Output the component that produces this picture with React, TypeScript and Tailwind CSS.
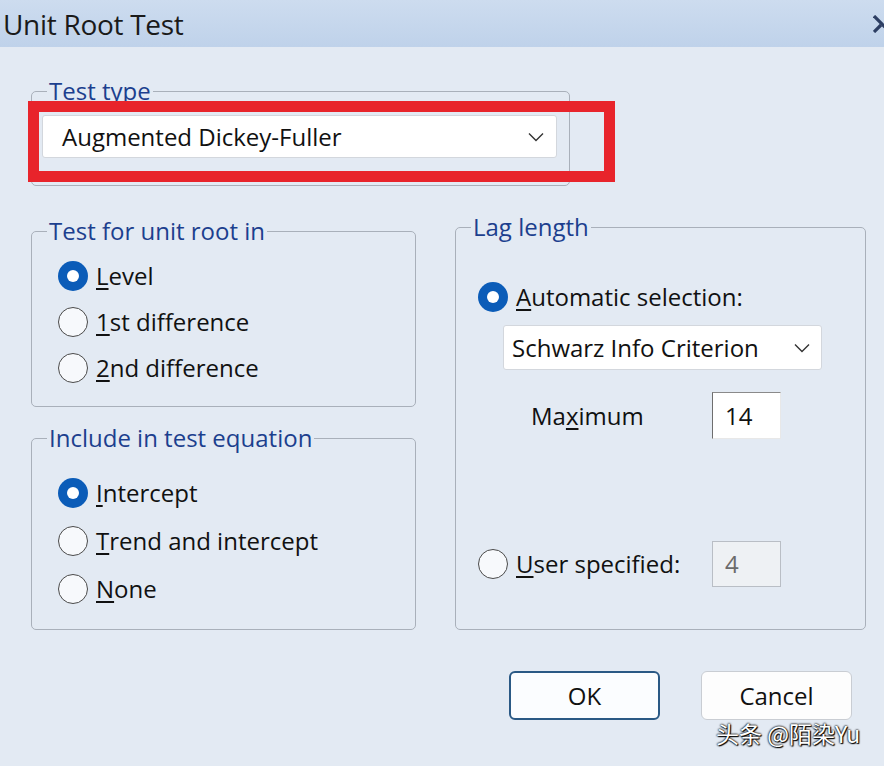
import React from "react";

function Radio({ checked }: { checked?: boolean }) {
  return checked ? (
    <span className="flex h-[30px] w-[30px] shrink-0 items-center justify-center rounded-full bg-[#0b5cb8]">
      <span className="h-[12px] w-[12px] rounded-full bg-white" />
    </span>
  ) : (
    <span className="h-[30px] w-[30px] shrink-0 rounded-full border-[1.5px] border-[#4a4a4a] bg-[#f7f9fc]" />
  );
}

function Chevron() {
  return (
    <svg width="16" height="10" viewBox="0 0 16 10" className="shrink-0">
      <path d="M1 1.5 L8 8.5 L15 1.5" fill="none" stroke="#333" strokeWidth="1.4" />
    </svg>
  );
}

function RadioRow({ checked, u, rest, h }: { checked?: boolean; u: string; rest: string; h: string }) {
  return (
    <div className={`flex items-center gap-[8px] ${h}`}>
      <Radio checked={checked} />
      <span>
        <span className="underline underline-offset-[3px] decoration-[1.5px]">{u}</span>
        {rest}
      </span>
    </div>
  );
}

export default function App() {
  return (
    <div
      className="relative h-[766px] w-[884px] overflow-hidden bg-[#e3eaf3] text-[24px] text-[#111]"
      style={{ fontFamily: '"Open Sans", "Noto Sans", "Noto Sans CJK SC", sans-serif' }}
    >
      {/* Title bar */}
      <div className="flex h-[47px] items-center justify-between overflow-hidden bg-gradient-to-b from-[#cddcef] to-[#bfd2ea] pl-[3px]">
        <span className="text-[28px] leading-none text-[#1a1a1a] tracking-[-0.3px]">Unit Root Test</span>
        <svg width="12" height="18" viewBox="0 0 12 18" className="mr-[-1px] shrink-0">
          <path d="M1 1 L12 12" fill="none" stroke="#2d3e63" strokeWidth="3.2" />
          <path d="M1 17 L8 10" fill="none" stroke="#2d3e63" strokeWidth="3.2" />
        </svg>
      </div>

      {/* Body */}
      <div className="flex flex-col pl-[31px] pr-[18px] pt-[32px]">
        {/* Test type */}
        <fieldset className="h-[107px] w-[539px] rounded-[5px] border border-[#a9b0ba]">
          <legend className="ml-[15px] px-[2px] text-[24px] leading-[24px] text-[#1c3f8e]">Test type</legend>
          <div className="ml-[10px] mt-[12px] flex h-[43px] w-[515px] items-center justify-between rounded-[3px] border border-[#d3d7dd] bg-white pl-[19px] pr-[12px]">
            <span>Augmented Dickey-Fuller</span>
            <Chevron />
          </div>
        </fieldset>

        {/* Columns */}
        <div className="mt-[29px] flex items-start gap-[39px]">
          <div className="flex w-[385px] shrink-0 flex-col gap-[19px] pt-[4px]">
            <fieldset className="h-[188px] rounded-[5px] border border-[#a9b0ba]">
              <legend className="ml-[15px] px-[2px] text-[24px] leading-[24px] text-[#1c3f8e]">Test for unit root in</legend>
              <div className="flex flex-col pl-[26px] pt-[10px]">
                <RadioRow checked u="L" rest="evel" h="h-[46px]" />
                <RadioRow u="1" rest="st difference" h="h-[46px]" />
                <RadioRow u="2" rest="nd difference" h="h-[46px]" />
              </div>
            </fieldset>
            <fieldset className="h-[204px] rounded-[5px] border border-[#a9b0ba]">
              <legend className="ml-[15px] px-[2px] text-[24px] leading-[24px] text-[#1c3f8e]">Include in test equation</legend>
              <div className="flex flex-col pl-[26px] pt-[19px]">
                <RadioRow checked u="I" rest="ntercept" h="h-[48px]" />
                <RadioRow u="T" rest="rend and intercept" h="h-[48px]" />
                <RadioRow u="N" rest="one" h="h-[48px]" />
              </div>
            </fieldset>
          </div>

          <fieldset className="h-[415px] w-[411px] shrink-0 rounded-[5px] border border-[#a9b0ba]">
            <legend className="ml-[15px] px-[2px] text-[24px] leading-[24px] text-[#1c3f8e]">Lag length</legend>
            <div className="flex flex-col pl-[22px] pt-[35px]">
              <RadioRow checked u="A" rest="utomatic selection:" h="h-[46px]" />
              <div className="ml-[25px] mt-[5px] flex h-[45px] w-[319px] items-center justify-between rounded-[3px] border border-[#d3d7dd] bg-white pl-[8px] pr-[11px]">
                <span>Schwarz Info Criterion</span>
                <Chevron />
              </div>
              <div className="mt-[22px] flex h-[47px] items-center">
                <span className="ml-[53px] w-[181px]">
                  Ma<span className="underline underline-offset-[3px] decoration-[1.5px]">x</span>imum
                </span>
                <div className="flex h-[47px] w-[69px] items-center border-b border-l-[1.5px] border-r border-t-[1.5px] border-b-[#e8e8e8] border-l-[#6e6e6e] border-r-[#e8e8e8] border-t-[#8a8a8a] bg-white pl-[12px]">
                  14
                </div>
              </div>
              <div className="mt-[102px] flex h-[46px] items-center">
                <div className="flex w-[234px] items-center gap-[8px]">
                  <Radio />
                  <span>
                    <span className="underline underline-offset-[3px] decoration-[1.5px]">U</span>ser specified:
                  </span>
                </div>
                <div className="flex h-[46px] w-[69px] items-center border border-[#b9bec5] bg-[#eef1f4] pl-[12px] text-[#6b6b6b]">
                  4
                </div>
              </div>
            </div>
          </fieldset>
        </div>

        {/* Buttons */}
        <div className="mt-[41px] flex justify-end gap-[41px] pr-[14px]">
          <button className="flex h-[49px] w-[151px] items-center justify-center rounded-[6px] border-2 border-[#2a5985] bg-[#fbfdff] text-[24px]">
            OK
          </button>
          <button className="flex h-[49px] w-[151px] items-center justify-center rounded-[6px] border border-[#c9cdd3] bg-[#fdfdfd] text-[24px]">
            Cancel
          </button>
        </div>
      </div>

      {/* Red annotation */}
      <div className="pointer-events-none absolute left-[28px] top-[101px] h-[81px] w-[587px] border-[11px] border-[#e8242b]" />

      {/* Watermark */}
      <div
        className="pointer-events-none absolute left-[716px] top-[722px] text-[23px] leading-none text-white [text-shadow:0_0_2px_#000,0_0_2px_#000,1px_1px_1px_#000]"
        style={{ fontFamily: '"Noto Sans CJK SC", sans-serif' }}
      >
        头条 @陌染Yu
      </div>
    </div>
  );
}
